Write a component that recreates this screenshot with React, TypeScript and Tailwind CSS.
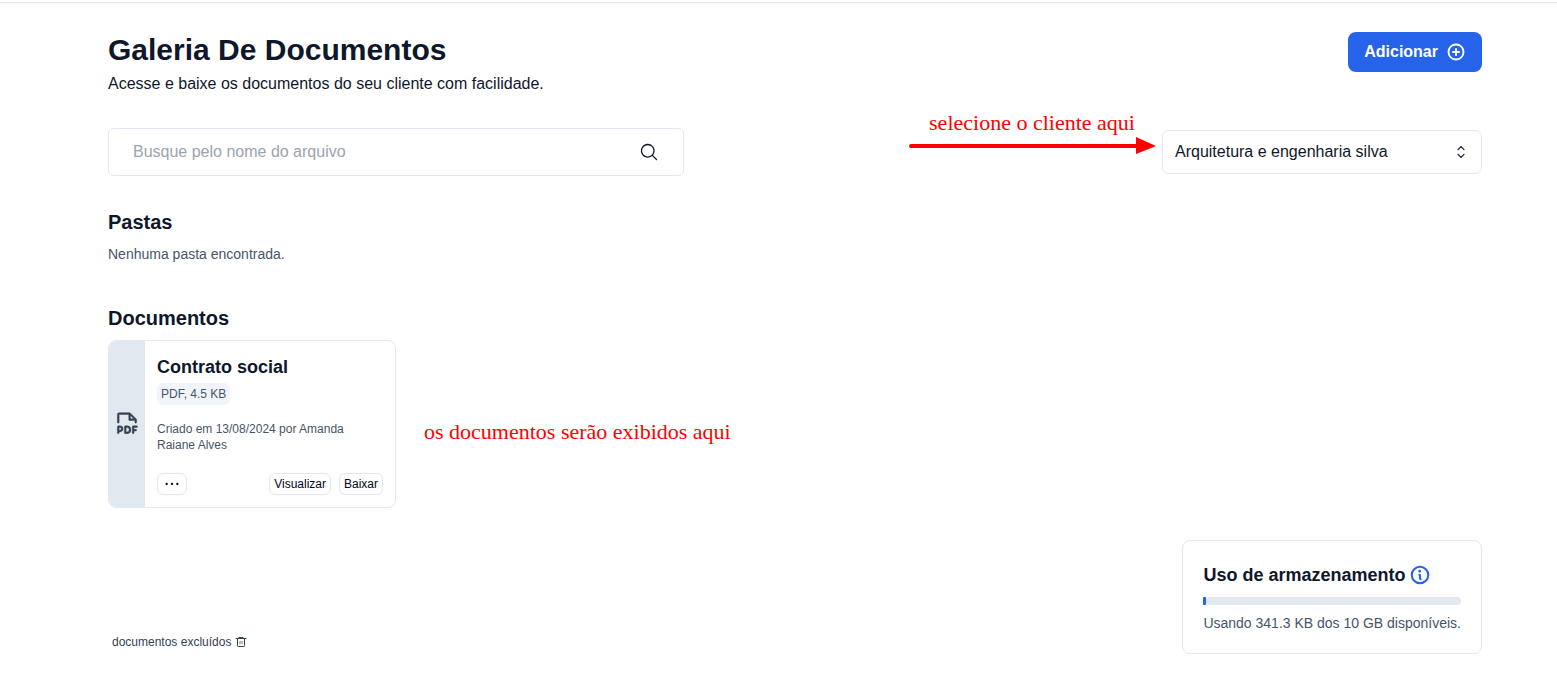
import React from "react";
import { PiFilePdf, PiInfoBold, PiMagnifyingGlass, PiPlusCircleBold } from "react-icons/pi";
import { RxCaretSort, RxDotsHorizontal } from "react-icons/rx";

function Header() {
  return (
    <header className="flex items-start justify-between">
      <div>
        <h1 className="text-3xl leading-9 font-bold">Galeria De Documentos</h1>
        <p className="mt-1 text-base">Acesse e baixe os documentos do seu cliente com facilidade.</p>
      </div>
      <button
        type="button"
        className="flex h-10 items-center gap-2 rounded-lg bg-[#2563eb] px-4 font-bold text-white"
      >
        Adicionar
        <PiPlusCircleBold className="size-5" aria-hidden="true" />
      </button>
    </header>
  );
}

function ClientHint() {
  return (
    <div className="pointer-events-none absolute right-full bottom-[19px] mr-1.5 flex flex-col items-center text-[#ff0000]">
      <p className="font-['Liberation_Serif',serif] text-[22px] leading-7 whitespace-nowrap">
        selecione o cliente aqui
      </p>
      <svg width="248" height="18" viewBox="0 0 248 18" aria-hidden="true">
        <path d="M3 9H230" stroke="currentColor" strokeWidth="4" strokeLinecap="round" />
        <path d="M228 0L248 9L228 17Z" fill="currentColor" />
      </svg>
    </div>
  );
}

function Filters() {
  return (
    <div className="mt-8 flex items-center justify-between">
      <div className="flex h-12 w-xl items-center rounded-md border border-[#e2e8f0] px-6">
        <input
          type="text"
          aria-label="Busque pelo nome do arquivo"
          placeholder="Busque pelo nome do arquivo"
          className="h-full min-w-0 flex-1 bg-transparent outline-none placeholder:text-[#9ca3af]"
        />
        <PiMagnifyingGlass className="size-5" aria-hidden="true" />
      </div>
      <div className="relative w-80">
        <ClientHint />
        <select
          aria-label="Cliente"
          className="h-11 w-full appearance-none rounded-md border border-[#e2e8f0] bg-white px-3"
        >
          <option>Arquitetura e engenharia silva</option>
        </select>
        <RxCaretSort
          className="pointer-events-none absolute top-3 right-[11px] size-5"
          aria-hidden="true"
        />
      </div>
    </div>
  );
}

function DocumentCard() {
  const action = "rounded-md border border-[#e2e8f0] px-1 py-0.5 text-xs text-[#020617]";
  return (
    <article className="flex w-72 overflow-hidden rounded-lg border border-[#e2e8f0]">
      <div className="flex items-center bg-[#e2e8f0] px-1 text-[#334155]">
        <PiFilePdf className="size-7 stroke-current stroke-[4]" aria-hidden="true" />
      </div>
      <div className="flex-1 p-3">
        <h3 className="text-lg leading-7 font-bold">Contrato social</h3>
        <p className="mt-0.5 flex h-[22px] w-fit items-center rounded-md bg-[#f1f5f9] px-1 text-xs text-[#475569]">
          PDF, 4.5 KB
        </p>
        <p className="mt-4 text-xs text-[#475569]">Criado em 13/08/2024 por Amanda Raiane Alves</p>
        <div className="mt-5 flex gap-2">
          <button
            type="button"
            aria-label="Mais opções"
            className="mr-auto rounded-md border border-[#e2e8f0] px-1.5 py-0.5"
          >
            <RxDotsHorizontal className="size-4" aria-hidden="true" />
          </button>
          <button type="button" className={action}>Visualizar</button>
          <button type="button" className={action}>Baixar</button>
        </div>
      </div>
    </article>
  );
}

function TrashIcon() {
  return (
    <svg className="size-3" viewBox="0 0 12 12" fill="none" stroke="currentColor" aria-hidden="true">
      <path d="M1 2.5H11M4 1.5H8" strokeLinecap="round" />
      <path d="M2.5 2.5V9.8Q2.5 10.5 3.2 10.5H8.8Q9.5 10.5 9.5 9.8V2.5" />
      <path d="M5 5V8.2M7 5V8.2" strokeOpacity="0.7" />
    </svg>
  );
}

function StorageUsage() {
  return (
    <section className="rounded-lg border border-[#e2e8f0] p-5">
      <div className="flex items-center gap-1">
        <h2 className="text-lg leading-7 font-bold">Uso de armazenamento</h2>
        <PiInfoBold className="size-[22px] text-[#2563eb]" aria-hidden="true" />
      </div>
      <div
        role="progressbar"
        aria-label="Uso de armazenamento"
        aria-valuenow={1}
        aria-valuemin={0}
        aria-valuemax={100}
        className="mt-2 h-2 rounded bg-[#e2e8f0]"
      >
        <div className="h-full w-[3px] rounded-[1px] bg-[#2563eb]" />
      </div>
      <p className="mt-2 text-sm text-[#475569]">Usando 341.3 KB dos 10 GB disponíveis.</p>
    </section>
  );
}

export default function App() {
  return (
    <div className="bg-white pt-0.5 font-['Liberation_Sans',sans-serif] text-[#0f172a]">
      <div className="border-t border-[#e2e8f0] shadow-[0_1px_2px_#0000000d]" />
      <main className="pt-[29px] pr-[75px] pb-[30px] pl-[108px]">
        <Header />
        <Filters />
        <section className="mt-8">
          <h2 className="text-xl leading-7 font-bold">Pastas</h2>
          <p className="mt-2 text-sm text-[#475569]">Nenhuma pasta encontrada.</p>
        </section>
        <section className="mt-10">
          <h2 className="text-xl leading-7 font-bold">Documentos</h2>
          <div className="mt-2 flex items-center gap-7">
            <DocumentCard />
            <p className="pt-4 font-['Liberation_Serif',serif] text-[22px] leading-7 text-[#ff0000]">
              os documentos serão exibidos aqui
            </p>
          </div>
        </section>
        <footer className="mt-8 flex items-end justify-between">
          <button type="button" className="flex h-6 items-center gap-1 px-1 text-xs text-[#334155]">
            documentos excluídos
            <TrashIcon />
          </button>
          <StorageUsage />
        </footer>
      </main>
    </div>
  );
}
